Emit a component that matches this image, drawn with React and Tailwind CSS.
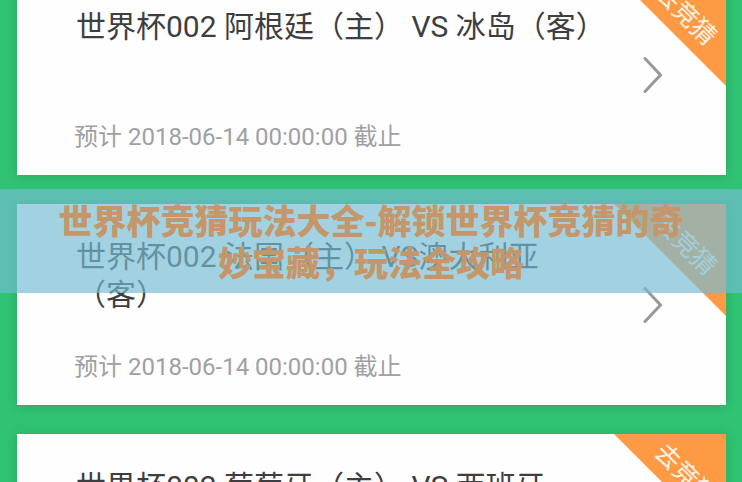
import React from 'react';

const matches = [
  { id: 1, title: '世界杯002 阿根廷（主） VS 冰岛（客）', deadline: '2018-06-14 00:00:00' },
  { id: 2, title: '世界杯002 法国（主） VS澳大利亚（客）', deadline: '2018-06-14 00:00:00' },
  { id: 3, title: '世界杯002 葡萄牙（主） VS 西班牙（客）', deadline: '2018-06-14 00:00:00' },
];

function Chevron() {
  return (
    <svg width="20" height="38" viewBox="0 0 20 38" fill="none" stroke="#97979c" strokeWidth="3" strokeLinecap="round" strokeLinejoin="miter">
      <path d="M2 2.5 L17.5 19 L2 35.5" />
    </svg>
  );
}

function MatchCard({ match }) {
  return (
    <article className="relative flex items-center gap-10 bg-[#fefefe] pt-[34px] pr-[63px] pb-[23px] pl-[57px] shadow-[0_1px_10px_rgba(20,110,50,0.3)]">
      <div className="min-w-0 flex-1">
        <h2 className="min-h-[76px] pl-[2px] text-[30px] leading-[38px] font-normal text-[#3e3e40]">{match.title}</h2>
        <p className="mt-[38px] text-[24px] leading-[30px] font-normal text-[#a0a0a4]">预计 {match.deadline} 截止</p>
      </div>
      <a href={`#match-${match.id}`} aria-label={match.title} className="mb-[10px] shrink-0">
        <Chevron />
      </a>
      <button
        type="button"
        className="absolute top-0 right-0 flex size-28 items-center justify-center bg-[#fe9a43] pb-8 pl-8 text-[25px] leading-none text-[#fff3e6] [clip-path:polygon(0_0,100%_0,100%_100%)]"
      >
        <span className="rotate-45 whitespace-nowrap">去竞猜</span>
      </button>
    </article>
  );
}

export default function App() {
  return (
    <div lang="zh-CN" className="relative h-screen overflow-hidden bg-[#30c373] font-[Roboto,'Noto_Sans_CJK_SC',sans-serif]">
      <main className="-mt-[26px] flex flex-col gap-[29px] pr-4 pl-[17px]">
        {matches.map((match) => (
          <MatchCard key={match.id} match={match} />
        ))}
      </main>

      {/* Headline band over the list */}
      <div className="absolute inset-0 flex items-center">
        <div className="w-full bg-[rgba(116,188,210,0.67)] px-12 py-[10px]">
          <h1 className="text-center font-['Noto_Sans_CJK_SC',sans-serif] text-[34px] leading-[42px] font-black text-[#c5966a]">
            世界杯竞猜玩法大全-解锁世界杯竞猜的奇妙宝藏，玩法全攻略
          </h1>
        </div>
      </div>
    </div>
  );
}
